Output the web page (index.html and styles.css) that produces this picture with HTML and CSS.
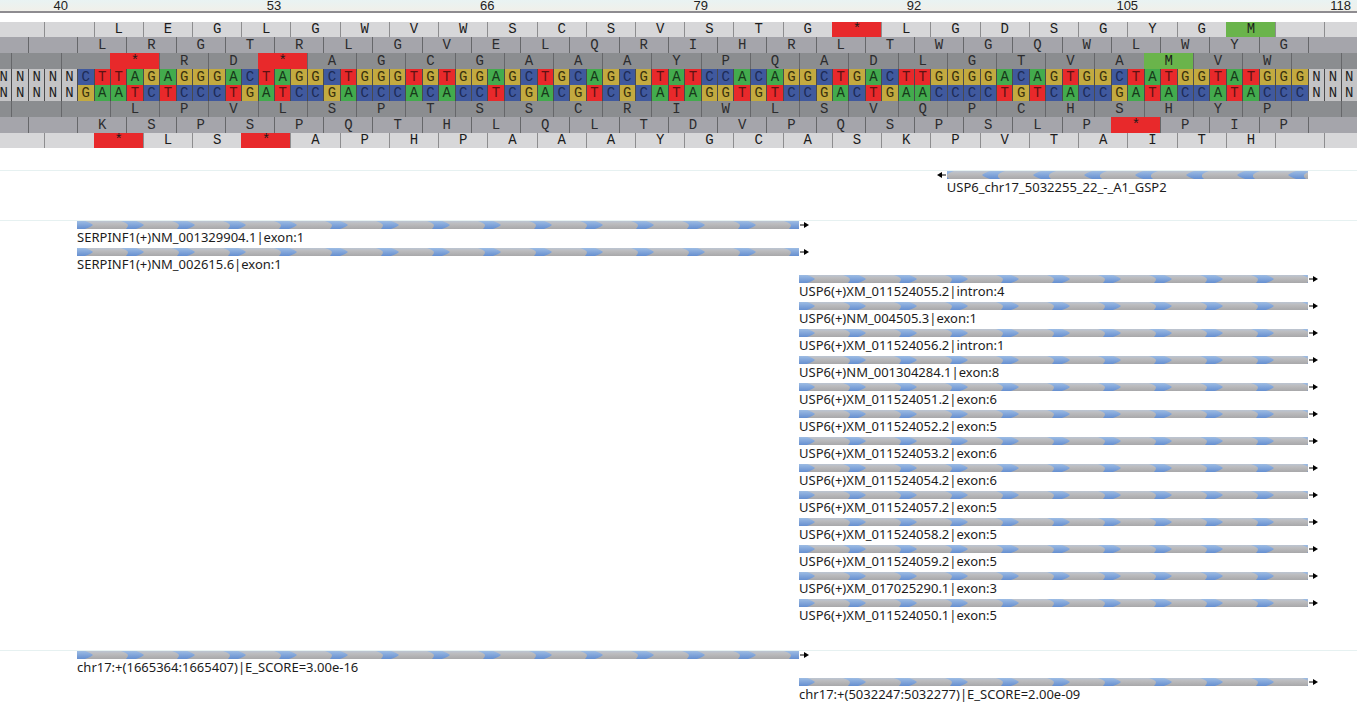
FILE: index.html
```html
<!DOCTYPE html>
<html lang="en">
<head>
<meta charset="utf-8">
<title>Sequence viewer</title>
<link rel="stylesheet" href="styles.css">
</head>
<body>
<svg class="defs" aria-hidden="true">
  <defs>
    <linearGradient id="blue" x1="0" y1="0" x2="0" y2="1">
      <stop offset="0" stop-color="#9dbce4"/>
      <stop offset="1" stop-color="#668fd0"/>
    </linearGradient>
    <pattern id="forward" width="51" height="8" patternUnits="userSpaceOnUse">
      <path fill="url(#blue)" d="M-7 0H8Q14 2 16 4Q14 6 8 8H-2Q0 6 0 4Q-1 2-7 0Z"/>
      <path fill="url(#blue)" d="M44 0H59Q65 2 67 4Q65 6 59 8H49Q51 6 51 4Q50 2 44 0Z"/>
    </pattern>
    <pattern id="reverse" width="51" height="8" patternUnits="userSpaceOnUse">
      <path fill="url(#blue)" d="M58 0H43Q37 2 35 4Q37 6 43 8H53Q51 6 51 4Q52 2 58 0Z"/>
      <path fill="url(#blue)" d="M7 0H0V4Q1 2 7 0ZM0 6V8H2Z"/>
    </pattern>
  </defs>
</svg>
<main class="viewer">
  <div class="lane ruler"><div class="columns" id="ruler"></div></div>
  <section class="sequence" id="sequence" aria-label="Sequence and translations"></section>
  <section class="tracks" id="tracks" aria-label="Annotations"></section>
</main>
<script src="script.js"></script>
</body>
</html>
```
FILE: styles.css
```css
* { box-sizing: border-box; }

body {
  margin: 0;
  background: #fff;
  color: #1c1c1c;
  font-family: "Noto Sans", sans-serif;
  overflow-x: hidden;
}

.defs { display: block; width: 0; height: 0; }

.lane {
  display: flex;
  justify-content: flex-end;
  overflow: hidden;
}

.columns {
  flex: none;
  width: calc(100% * 83 / 82.7);
  display: grid;
  grid-template-columns: repeat(83, minmax(0, 1fr));
}

.ruler {
  height: 13px;
  overflow: visible;
  background: linear-gradient(#e9f3f3, #f1f0ea);
  border-bottom: 2px solid #8e8c90;
}

.tick {
  display: flex;
  justify-content: center;
  font: 13px/11px "Liberation Sans", Arial, sans-serif;
  color: #222;
}

.sequence { padding-top: 9px; }

.row {
  height: 16px;
  font: 14px/16px "Liberation Mono", "Courier New", monospace;
  text-align: center;
}

.row-outer { height: 15px; background: #d7d7d9; }
.row-middle { background: #a5a5ab; color: #2c2c2e; }
.row-inner { background: #8b8d90; color: #2c2c2e; }
.row-bases { background: #c4c4c6; }
.row-outer .codon { border-color: #8d8d8f; line-height: 15px; }

.codon { border-left: 1px solid #66676a; }
.row .codon.stop { background: #e8292b; border-color: #e8292b; color: #1c1c1c; }
.row .codon.start { background: #6ab44b; border-color: #6ab44b; color: #1c1c1c; }

.base { border-left: 1px solid #4a4a4c; }
.base-a { background: #43ab4d; color: #17381a; }
.base-c { background: #40599e; color: #1d2b55; }
.base-g { background: #c3aa40; color: #39310d; }
.base-t { background: #e8292b; color: #5e1213; }

.tracks {
  display: flex;
  flex-direction: column;
  padding-top: 22px;
}

.track { border-top: 1px solid #e6f1f1; }
.track-primer { height: 50px; }
.track-genes { height: 430px; }

.feature { height: 27px; min-width: 0; position: relative; }

.bar {
  display: block;
  width: 100%;
  height: 8px;
  background: linear-gradient(#bcc5d2, #bcbcbe 35%, #a8a8aa);
}

.arrow {
  position: absolute;
  top: 0;
  left: 100%;
  width: 10px;
  height: 8px;
}

.feature.reverse .arrow { left: auto; right: 100%; transform: scaleX(-1); }

.label {
  display: block;
  font-size: 13px;
  line-height: 16px;
  white-space: nowrap;
}
```
FILE: script.js
```js
const COLUMNS = 83;
const FIRST = 6;
const BASES = "CTTAGAGGGACTAGGCTGGGTGTGGAGCTGCAGCGTATCCACAGGCTGACTTGGGGACAGTGGCTATGGTATGGG";
const PAIR = { A: "T", T: "A", C: "G", G: "C", N: "N" };

function element(tag, className, text) {
  const node = document.createElement(tag);
  node.className = className;
  if (text) node.textContent = text;
  return node;
}

function lane(className) {
  const outer = element("div", "lane " + className);
  const columns = element("div", "columns");
  outer.append(columns);
  return { outer, columns };
}

const ruler = document.getElementById("ruler");
[40, 53, 66, 79, 92, 105, 118].forEach((position, i) => {
  const tick = element("span", "tick", String(position));
  tick.style.gridColumn = `${4 + i * 13} / span 2`;
  ruler.append(tick);
});

function codonRow(className, offset, first, residues) {
  const { outer, columns } = lane("row " + className);
  if (offset) {
    const lead = element("span", "codon");
    lead.style.gridColumn = `1 / span ${offset}`;
    columns.append(lead);
  }
  for (let start = offset + 1, i = -first; start <= COLUMNS; start += 3, i++) {
    const residue = residues[i] || "";
    const kind = residue === "*" ? " stop" : residue === "M" ? " start" : "";
    const cell = element("span", "codon" + kind, residue);
    cell.style.gridColumn = `${start} / ${Math.min(start + 3, COLUMNS + 1)}`;
    columns.append(cell);
  }
  return outer;
}

function baseRow(bases) {
  const { outer, columns } = lane("row row-bases");
  for (const base of bases) {
    columns.append(element("span", "base base-" + base.toLowerCase(), base));
  }
  return outer;
}

const strand = "NNNNN" + BASES + "NNN";
document.getElementById("sequence").append(
  codonRow("row-outer", 0, 2, "LEGLGWVWSCSVSTG*LGDSGYGM"),
  codonRow("row-middle", 2, 1, "LRGTRLGVELQRIHRLTWGQWLWYG"),
  codonRow("row-inner", 1, 2, "*RD*AGCGAAAYPQADLGTVAMVW"),
  baseRow(strand),
  baseRow([...strand].map(base => PAIR[base])),
  codonRow("row-inner", 1, 2, "LPVLSPTSSCRIWLSVQPCHSHYP"),
  codonRow("row-middle", 2, 1, "KSPSPQTHLQLTDVPQSPSLP*PIP"),
  codonRow("row-outer", 0, 2, "*LS*APHPAAAYGCASKPVTAITH")
);

const SERPINF1 = [FIRST, 44];
const USP6 = [50, 31];
const TRACKS = [
  { name: "primer", groups: [
    { range: [59, 22], reverse: true, labels: ["USP6_chr17_5032255_22_-_A1_GSP2"] }
  ] },
  { name: "genes", groups: [
    { range: SERPINF1, labels: [
      "SERPINF1(+)NM_001329904.1|exon:1",
      "SERPINF1(+)NM_002615.6|exon:1"
    ] },
    { range: USP6, labels: [
      "USP6(+)XM_011524055.2|intron:4",
      "USP6(+)NM_004505.3|exon:1",
      "USP6(+)XM_011524056.2|intron:1",
      "USP6(+)NM_001304284.1|exon:8",
      "USP6(+)XM_011524051.2|exon:6",
      "USP6(+)XM_011524052.2|exon:5",
      "USP6(+)XM_011524053.2|exon:6",
      "USP6(+)XM_011524054.2|exon:6",
      "USP6(+)XM_011524057.2|exon:5",
      "USP6(+)XM_011524058.2|exon:5",
      "USP6(+)XM_011524059.2|exon:5",
      "USP6(+)XM_017025290.1|exon:3",
      "USP6(+)XM_011524050.1|exon:5"
    ] }
  ] },
  { name: "hits", groups: [
    { range: SERPINF1, labels: ["chr17:+(1665364:1665407)|E_SCORE=3.00e-16"] },
    { range: USP6, labels: ["chr17:+(5032247:5032277)|E_SCORE=2.00e-09"] }
  ] }
];

function featureLane(label, [start, span], reverse) {
  const { outer, columns } = lane("feature-lane");
  const feature = element("div", "feature" + (reverse ? " reverse" : ""));
  feature.style.gridColumn = `${start} / span ${span}`;
  feature.innerHTML =
    `<svg class="bar" aria-hidden="true"><rect width="100%" height="8" fill="url(#${reverse ? "reverse" : "forward"})"/></svg>` +
    `<svg class="arrow" viewBox="0 0 10 8" aria-hidden="true"><path d="M1 4H7" stroke="#000"/><path d="M5 1L10 4L5 7Z"/></svg>`;
  feature.append(element("span", "label", label));
  columns.append(feature);
  return outer;
}

const tracks = document.getElementById("tracks");
for (const { name, groups } of TRACKS) {
  const track = element("div", "track track-" + name);
  for (const { range, reverse, labels } of groups) {
    const group = element("div", "group");
    group.append(...labels.map(label => featureLane(label, range, reverse)));
    track.append(group);
  }
  tracks.append(track);
}
```
